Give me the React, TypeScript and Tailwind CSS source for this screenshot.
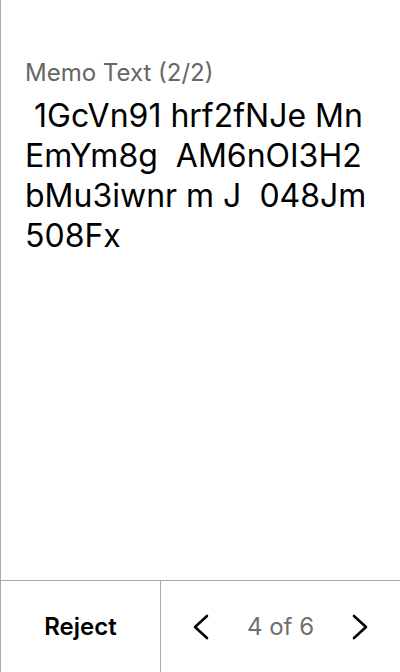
const MEMO = ' 1GcVn91 hrf2fNJe Mn EmYm8g  AM6nOI3H2 bMu3iwnr m J  048Jm 508Fx';

function Chevron({ dir }: { dir: 'left' | 'right' }) {
  return (
    <svg width="18" height="26" viewBox="0 0 18 26" fill="none" stroke="black" strokeWidth="2.6" strokeLinecap="round" strokeLinejoin="round">
      {dir === 'left' ? <polyline points="15,2 3,13 15,24" /> : <polyline points="3,2 15,13 3,24" />}
    </svg>
  );
}

export default function App() {
  return (
    <div
      className="flex h-[672px] w-[400px] flex-col border-l border-[#a8a8a8] bg-white"
      style={{ fontFamily: 'Inter, "Liberation Sans", sans-serif' }}
    >
      <main className="flex-1 px-6 pt-[59px]">
        <p className="text-[24px] leading-[28px] text-[#666666]">Memo Text (2/2)</p>
        <p className="mt-[9px] whitespace-pre-wrap break-words text-[32px] leading-[40px] text-black">
          {MEMO}
        </p>
      </main>
      <footer className="flex h-[92px] border-t border-[#a8a8a8]">
        <button
          type="button"
          className="flex w-[160px] items-center justify-center border-r border-[#a8a8a8] text-[24px] font-semibold text-black"
        >
          Reject
        </button>
        <div className="flex flex-1 items-center justify-between px-[31px]">
          <Chevron dir="left" />
          <span className="text-[24px] text-[#707070]">4 of 6</span>
          <Chevron dir="right" />
        </div>
      </footer>
    </div>
  );
}
